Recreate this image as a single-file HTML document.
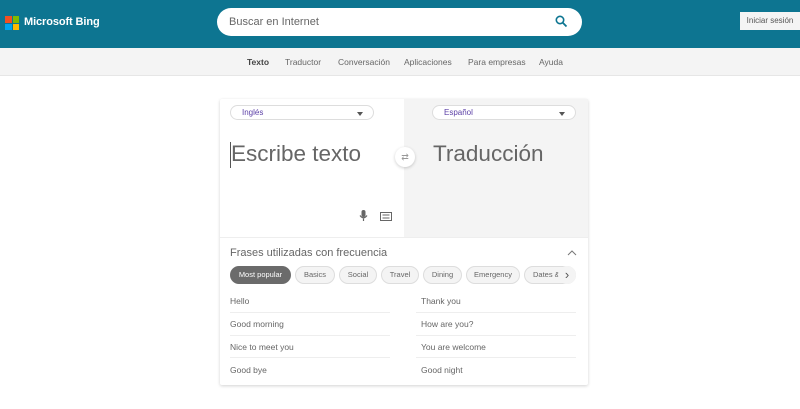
<!DOCTYPE html>
<html><head><meta charset="utf-8"><style>
*{box-sizing:border-box;margin:0;padding:0}
body{width:800px;height:409px;background:#fff;font-family:"Liberation Sans",Arial,sans-serif;position:relative;overflow:hidden}
.hdr{position:absolute;left:0;top:0;width:800px;height:48px;background:#0d7591}
.logo{position:absolute;left:5px;top:16px;width:14px;height:14px}
.logo i{position:absolute;width:6.5px;height:6.5px}
.brand{position:absolute;left:24px;top:16px;color:#fff;font-size:11px;font-weight:bold;letter-spacing:-0.1px}
.search{position:absolute;left:217px;top:8px;width:365px;height:28px;background:#fff;border-radius:14px}
.search span{position:absolute;left:12px;top:8px;font-size:11px;color:#666}
.login{position:absolute;left:740px;top:12px;width:60px;height:18px;background:#f4f4f4;font-size:8px;color:#555;text-align:center;line-height:18px}
.nav{position:absolute;top:48px;left:0;width:800px;height:28px;background:#f4f4f4;border-bottom:1px solid #e6e6e6}
.nav span{position:absolute;top:9px;font-size:8.5px;color:#666}
.card{position:absolute;left:220px;top:99px;width:368px;height:286px;background:#fff;box-shadow:0 1px 3px rgba(0,0,0,.18);border-radius:2px}
.right{position:absolute;left:184px;top:0;width:184px;height:138px;background:#f4f4f4}
.sel{position:absolute;top:6px;width:144px;height:15px;border:1px solid #ddd;border-radius:8px;background:#fff;font-size:8px;color:#5b3fa6;padding:2px 0 0 11px}
.sel b{position:absolute;right:10px;top:6px;border:3.5px solid transparent;border-top:4px solid #555;border-bottom:0}
.big{position:absolute;top:42px;font-size:22.5px;color:#666}
.swap{position:absolute;left:175px;top:48px;width:20px;height:20px;border-radius:50%;background:#fff;box-shadow:0 1px 3px rgba(0,0,0,.2);font-size:9px;color:#999;text-align:center;line-height:20px}
.sec{position:absolute;top:148px;left:10px;font-size:11px;color:#666}
.chip{position:absolute;top:167px;height:18px;border:1px solid #ddd;border-radius:9px;background:#f4f4f4;font-size:7.5px;color:#666;text-align:center;line-height:16px}
.ph{position:absolute;font-size:8.5px;color:#666}
.ln{position:absolute;height:1px;background:#eee;width:160px}
</style></head><body>
<div class="hdr">
<div class="logo"><i style="left:0;top:0;background:#f25022"></i><i style="left:7.5px;top:0;background:#7fba00"></i><i style="left:0;top:7.5px;background:#00a4ef"></i><i style="left:7.5px;top:7.5px;background:#ffb900"></i></div>
<div class="brand">Microsoft Bing</div>
<div class="search"><span>Buscar en Internet</span>
<svg style="position:absolute;left:338px;top:7px" width="13" height="13" viewBox="0 0 13 13"><circle cx="5" cy="5" r="3.7" fill="none" stroke="#0d7591" stroke-width="1.6"/><path d="M7.8 7.8L11.5 11.5" stroke="#0d7591" stroke-width="1.8"/></svg></div>
<div class="login">Iniciar sesión</div>
</div>
<div class="nav">
<span style="left:247px;font-weight:bold;color:#444">Texto</span>
<span style="left:285px">Traductor</span>
<span style="left:338px">Conversación</span>
<span style="left:404px">Aplicaciones</span>
<span style="left:468px">Para empresas</span>
<span style="left:539px">Ayuda</span>
</div>
<div class="card">
<div class="right"></div>
<div class="sel" style="left:10px">Inglés<b></b></div>
<div class="sel" style="left:212px">Español<b></b></div>
<div style="position:absolute;left:10px;top:43px;width:1px;height:26px;background:#555"></div>
<div class="big" style="left:11px">Escribe texto</div>
<div class="big" style="left:213px">Traducción</div>
<div class="swap">⇄</div>
<svg style="position:absolute;left:139px;top:111px" width="9" height="12" viewBox="0 0 9 12"><rect x="2.5" y="0" width="4" height="7" rx="2" fill="#666"/><path d="M1 5.5Q4.5 10 8 5.5M4.5 8.5V11" stroke="#666" fill="none" stroke-width="1.2"/></svg>
<svg style="position:absolute;left:160px;top:113px" width="12" height="9" viewBox="0 0 12 9"><rect x=".5" y=".5" width="11" height="8" fill="none" stroke="#666"/><path d="M2.5 3h7M2.5 6h7" stroke="#666"/></svg>
<div style="position:absolute;left:0;top:138px;width:368px;height:1px;background:#eee"></div>
<div class="sec">Frases utilizadas con frecuencia</div>
<svg style="position:absolute;left:347px;top:151px" width="10" height="6" viewBox="0 0 10 6"><path d="M1 5L5 1L9 5" stroke="#777" fill="none"/></svg>
<div class="chip" style="left:10px;width:61px;background:#6b6b6b;color:#fff;border-color:#6b6b6b">Most popular</div>
<div class="chip" style="left:75px;width:40px">Basics</div>
<div class="chip" style="left:119px;width:38px">Social</div>
<div class="chip" style="left:161px;width:38px">Travel</div>
<div class="chip" style="left:203px;width:39px">Dining</div>
<div class="chip" style="left:246px;width:54px">Emergency</div>
<div class="chip" style="left:304px;width:52px;text-align:left;padding-left:8px">Dates &amp;</div>
<div style="position:absolute;left:338px;top:167px;width:18px;height:18px;border-radius:50%;background:#f4f4f4;font-size:13px;color:#555;text-align:center;line-height:17px">›</div>
<div class="ph" style="left:10px;top:197px">Hello</div><div class="ph" style="left:201px;top:197px">Thank you</div>
<div class="ln" style="left:10px;top:213px"></div><div class="ln" style="left:196px;top:213px;width:160px"></div>
<div class="ph" style="left:10px;top:220px">Good morning</div><div class="ph" style="left:201px;top:220px">How are you?</div>
<div class="ln" style="left:10px;top:236px"></div><div class="ln" style="left:196px;top:236px"></div>
<div class="ph" style="left:10px;top:243px">Nice to meet you</div><div class="ph" style="left:201px;top:243px">You are welcome</div>
<div class="ln" style="left:10px;top:258px"></div><div class="ln" style="left:196px;top:258px"></div>
<div class="ph" style="left:10px;top:266px">Good bye</div><div class="ph" style="left:201px;top:266px">Good night</div>
</div>
</body></html>
